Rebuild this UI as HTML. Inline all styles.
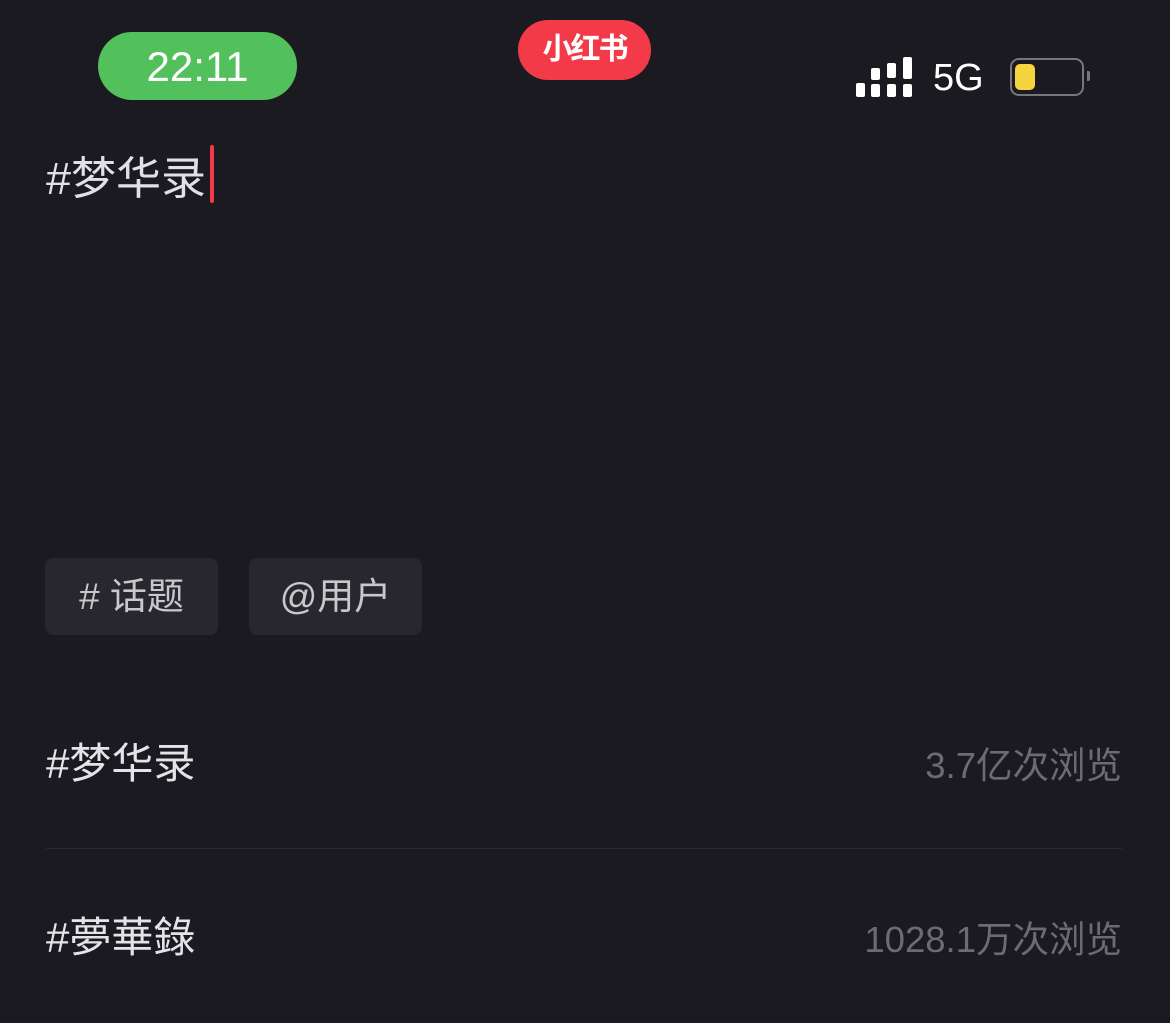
<!DOCTYPE html>
<html><head><meta charset="utf-8"><style>
body{margin:0;width:1170px;height:1023px;background:#1b1a20;position:relative;overflow:hidden;font-family:"Liberation Sans","Noto Sans CJK SC",sans-serif;}
.a{position:absolute}
.time{left:98px;top:32px;width:199px;height:68px;border-radius:34px;background:#52c15c;color:#fff;font-size:42px;text-align:center;line-height:70px}
.logo{left:518px;top:20px;width:133px;height:60px;border-radius:30px;background:#f23a48;color:#fff;font-size:30px;font-weight:bold;text-align:center;line-height:60px;letter-spacing:-2px}
.dot{background:#fff;border-radius:2px;width:9px}
.btn{top:558px;width:173px;height:77px;border-radius:8px;background:#28272d;color:#c8c8cc;font-size:37px;line-height:77px;text-align:center}
.row{left:46px;color:#e4e4e8;font-size:42px}
.r{right:48px;color:#6c6b72;font-size:36.5px}
</style></head><body>
<div class="a time">22:11</div>
<div class="a logo">小红书</div>
<div class="a dot" style="left:856px;top:83px;height:14px"></div>
<div class="a dot" style="left:871px;top:68px;height:12px"></div>
<div class="a dot" style="left:871px;top:84px;height:13px"></div>
<div class="a dot" style="left:887px;top:63px;height:15px"></div>
<div class="a dot" style="left:887px;top:84px;height:13px"></div>
<div class="a dot" style="left:903px;top:57px;height:22px"></div>
<div class="a dot" style="left:903px;top:84px;height:13px"></div>
<div class="a" style="left:933px;top:57px;color:#fff;font-size:38px">5G</div>
<div class="a" style="left:1010px;top:58px;width:70px;height:34px;border:2px solid #77767c;border-radius:9px"></div>
<div class="a" style="left:1015px;top:64px;width:20px;height:26px;background:#f5d53d;border-radius:5px"></div>
<div class="a" style="left:1087px;top:71px;width:3px;height:10px;background:#77767c;border-radius:0 2px 2px 0"></div>
<div class="a" style="left:46px;top:142px;color:#dfe0e8;font-size:45px">#梦华录</div>
<div class="a" style="left:210px;top:145px;width:4px;height:58px;background:#f23a48;border-radius:2px"></div>
<div class="a btn" style="left:45px"># 话题</div>
<div class="a btn" style="left:249px">@用户</div>
<div class="a row" style="top:730px">#梦华录</div>
<div class="a r" style="top:736px">3.7亿次浏览</div>
<div class="a" style="left:46px;top:848px;width:1076px;height:1px;background:#2a2930"></div>
<div class="a row" style="top:904px">#夢華錄</div>
<div class="a r" style="top:910px">1028.1万次浏览</div>
</body></html>
